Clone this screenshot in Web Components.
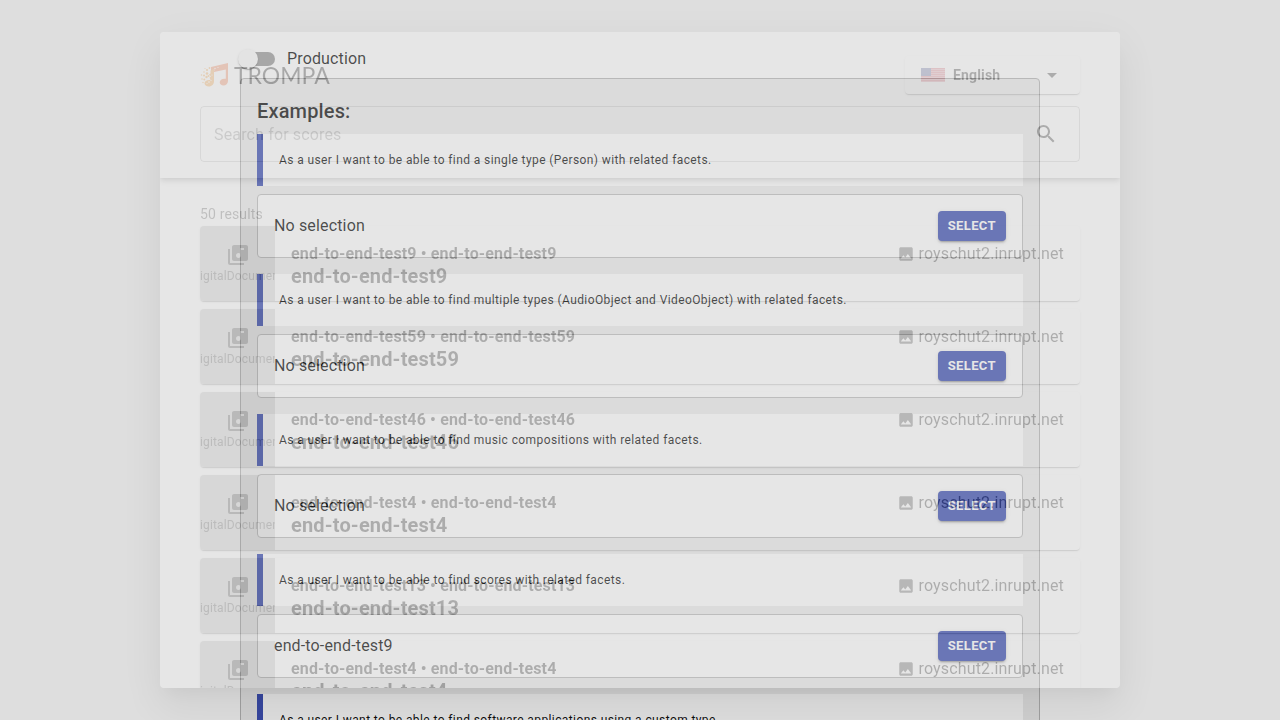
<!DOCTYPE html>
<html lang="en">
<head>
<meta charset="utf-8">
<meta name="viewport" content="width=device-width, initial-scale=1">
<title>Trompa multi modal component</title>
<style>
  html, body { height: 100%; }
  body {
    margin: 0;
    overflow: hidden;
    background: #fff;
    color: rgba(0, 0, 0, .87);
    font-family: Roboto, "Liberation Sans", sans-serif;
    letter-spacing: .00938em;
    --primary: #3f51b5;
    --fade: .26;
  }
</style>
</head>
<body>
<example-page>
  <toggle-switch label="Production"></toggle-switch>
  <example-panel heading="Examples:">
    <use-case value="No selection">As a user I want to be able to find a single type (Person) with related facets.</use-case>
    <use-case value="No selection">As a user I want to be able to find multiple types (AudioObject and VideoObject) with related facets.</use-case>
    <use-case value="No selection">As a user I want to be able to find music compositions with related facets.</use-case>
    <use-case value="end-to-end-test9">As a user I want to be able to find scores with related facets.</use-case>
    <use-case value="No selection">As a user I want to be able to find software applications using a custom type.</use-case>
  </example-panel>
</example-page>
<modal-dialog>
  <trompa-logo slot="brand"></trompa-logo>
  <language-select slot="tools"></language-select>
  <search-field slot="search" placeholder="Search for scores"></search-field>
  <result-list count="50 results">
    <result-card name="end-to-end-test9"></result-card>
    <result-card name="end-to-end-test59"></result-card>
    <result-card name="end-to-end-test46"></result-card>
    <result-card name="end-to-end-test4"></result-card>
    <result-card name="end-to-end-test13"></result-card>
    <result-card name="end-to-end-test4"></result-card>
  </result-list>
</modal-dialog>

<script>
const define = (name, render) => customElements.define(name, class extends HTMLElement {
  constructor() {
    super();
    this.attachShadow({ mode: 'open' });
  }
  connectedCallback() {
    this.shadowRoot.innerHTML = '<style>*{box-sizing:border-box}</style>' + render(this);
  }
});

define('example-page', () => `
  <style>
    :host { display: block; max-width: 800px; margin: 0 auto; padding: 40px 0; color: rgba(0,0,0,.94); }
  </style>
  <slot></slot>`);

define('toggle-switch', el => `
  <style>
    :host { display: block; height: 38px; }
    label { display: inline-flex; align-items: center; height: 38px; gap: 12px; font-size: 16px; line-height: 24px; cursor: pointer; }
    input { appearance: none; position: relative; display: flex; align-items: center; width: 36px; height: 20px; margin: 0 0 0 -1px; }
    input::before { content: ""; width: 34px; height: 14px; margin-left: 2px; border-radius: 7px; background: #000; opacity: .38; }
    input::after {
      content: ""; position: absolute; left: -1px; top: 0; width: 20px; height: 20px; border-radius: 50%; background: #fafafa;
      box-shadow: 0 2px 1px -1px rgba(0,0,0,.2), 0 1px 1px rgba(0,0,0,.14), 0 1px 3px rgba(0,0,0,.12);
    }
    input:checked::before { background: var(--primary); opacity: .5; }
    input:checked::after { left: 19px; background: var(--primary); }
  </style>
  <label><input type="checkbox" role="switch">${el.getAttribute('label')}</label>`);

define('example-panel', el => `
  <style>
    :host { display: block; padding: 16px; border: 1px solid #b8b8b8; border-radius: 4px; background: #eee; }
    h2 { margin: 0 0 7px; font-size: 20px; font-weight: 500; line-height: 32px; letter-spacing: .0075em; }
    .cases { display: grid; gap: 16px; }
  </style>
  <h2>${el.getAttribute('heading')}</h2>
  <div class="cases"><slot></slot></div>`);

define('use-case', el => `
  <style>
    :host { display: grid; gap: 8px; }
    blockquote {
      margin: 0; padding: 16px; border-left: 6px solid var(--primary); background: #fff;
      font-size: 12px; line-height: 20px; letter-spacing: .03333em;
    }
    .selection {
      display: flex; align-items: center; justify-content: space-between; gap: 16px;
      padding: 16px; border: 1px solid #c0c0c0; border-radius: 4px; background: #fff;
      font-size: 16px; line-height: 24px;
    }
    button {
      padding: 4px 10px; border: 0; border-radius: 4px; background: var(--primary); color: #fff; cursor: pointer;
      font: 700 13px/22px Roboto, sans-serif; letter-spacing: .02857em; text-transform: uppercase;
      box-shadow: 0 3px 1px -2px rgba(0,0,0,.2), 0 2px 2px rgba(0,0,0,.14), 0 1px 5px rgba(0,0,0,.12);
    }
  </style>
  <blockquote><slot></slot></blockquote>
  <div class="selection"><span>${el.getAttribute('value')}</span><button type="button">Select</button></div>`);

define('modal-dialog', () => `
  <style>
    :host { position: fixed; inset: 0; display: flex; justify-content: center; padding: 32px; box-sizing: border-box; }
    .backdrop { position: absolute; inset: 0; background: rgba(0,0,0,.5); opacity: var(--fade); }
    .paper {
      position: relative; flex: 1; max-width: 960px; display: flex; flex-direction: column; overflow: hidden;
      border-radius: 4px; background: #fff; opacity: var(--fade);
      box-shadow: 0 11px 15px -7px rgba(0,0,0,.2), 0 24px 38px 3px rgba(0,0,0,.14), 0 9px 46px 8px rgba(0,0,0,.12);
    }
    header {
      flex: none; display: grid; gap: 12px; padding: 24px 40px 16px; background: #fff; z-index: 1;
      box-shadow: 0 2px 4px -1px rgba(0,0,0,.2), 0 4px 5px rgba(0,0,0,.14), 0 1px 10px rgba(0,0,0,.12);
    }
    .bar { display: flex; align-items: center; justify-content: space-between; }
    main { flex: 1; min-height: 0; overflow: hidden; padding: 24px 40px; }
  </style>
  <div class="backdrop"></div>
  <div class="paper" role="dialog" aria-modal="true" aria-label="Search for scores">
    <header>
      <div class="bar"><slot name="brand"></slot><slot name="tools"></slot></div>
      <slot name="search"></slot>
    </header>
    <main><slot></slot></main>
  </div>`);

define('trompa-logo', () => `
  <style>
    :host { display: flex; align-items: center; gap: 6px; color: #111; font: 400 23px/24px Lato, sans-serif; letter-spacing: normal; }
    svg { display: block; }
  </style>
  <svg width="28" height="24" viewBox="0 0 28 24" aria-hidden="true">
    <path fill="#f47c4c" d="M11 4 28 0v18c0 2.500-2 4.500-4.500 4.500-2.200 0-3.800-1.300-3.800-3.200 0-2.500 2.800-4.200 6.100-3.500V6.500L14 9v4l-3-1z"/>
    <g fill="#fff"><circle cx="15" cy="5.500" r=".7"/><circle cx="18" cy="4.500" r=".6"/><circle cx="14" cy="7" r=".6"/></g>
    <g fill="#f5a244">
      <path d="M10.500 7.500 14 6v12c0 3.200-2 5.500-5.200 5.500-2.500 0-4.300-1.300-4.300-3.200 0-2.400 2.600-3.800 6-3.300l-1-2.400 1.500-1.200-2-2 1.500-1z"/>
      <circle cx="7" cy="7" r="1.100"/><circle cx="9.500" cy="5" r=".9"/><circle cx="4" cy="9" r=".8"/><circle cx="7" cy="10.500" r="1.300"/>
      <circle cx="1.500" cy="12" r=".8"/><circle cx="4" cy="12.500" r="1"/><circle cx="6.500" cy="14" r="1.200"/><circle cx="2" cy="16" r=".8"/>
      <circle cx="4.300" cy="16.500" r="1"/><circle cx="3" cy="19.500" r=".7"/><circle cx="5" cy="5.500" r=".6"/><circle cx="8.500" cy="13" r="1"/>
    </g>
    <g fill="#fff"><circle cx="9" cy="19" r=".8"/><circle cx="7" cy="20.500" r=".5"/><circle cx="11" cy="17.500" r=".6"/><circle cx="12" cy="12" r=".6"/></g>
  </svg>
  <span>TROMPA</span>`);

define('language-select', () => {
  let stripes = '';
  for (let i = 0; i < 7; i++) stripes += `<path fill="#dc7480" d="M0 ${i * 2}h24v1H0z"/>`;
  let stars = '';
  for (let y = 1; y < 7; y += 2) for (let x = 1; x < 10; x += 2) stars += `<circle cx="${x}" cy="${y}" r=".35"/>`;
  return `
  <style>
    :host { display: grid; align-items: center; width: 175px; height: 38px; border-radius: 4px; background: #fff;
      box-shadow: 0 2px 1px -1px rgba(0,0,0,.2), 0 1px 1px rgba(0,0,0,.14), 0 1px 3px rgba(0,0,0,.12); }
    :host > * { grid-area: 1 / 1; }
    svg { pointer-events: none; grid-area: 1 / 1; }
    .flag { margin-left: 16px; }
    .arrow { justify-self: end; margin-right: 16px; fill: rgba(0,0,0,.87); }
    select { grid-area: 1 / 1; appearance: none; width: 100%; height: 38px; margin: 0; padding: 0 48px; border: 0; background: none;
      color: rgba(0,0,0,.87); font: 700 14px/24px Roboto, sans-serif; letter-spacing: .01071em; }
  </style>
  <select aria-label="Language"><option>English</option><option>Nederlands</option></select>
  <svg class="flag" width="24" height="14" viewBox="0 0 24 14" aria-hidden="true">
    <path fill="#e8a4ac" d="M0 0h24v14H0z"/>${stripes}<path fill="#6068a0" d="M0 0h10v8H0z"/><g fill="#b8bcd8">${stars}</g>
  </svg>
  <svg class="arrow" width="24" height="24" viewBox="0 0 24 24" aria-hidden="true"><path d="M7 10l5 5 5-5z"/></svg>`;
});

define('search-field', el => `
  <style>
    :host { display: flex; align-items: center; height: 56px; padding-right: 9px; border: 1px solid rgba(0,0,0,.23); border-radius: 4px; box-sizing: border-box; }
    input { flex: 1; min-width: 0; height: 100%; padding: 0 13px; border: 0; outline: 0; background: none; color: inherit; font: 16px/24px Roboto, sans-serif; letter-spacing: .00938em; }
    input::placeholder { color: rgba(0,0,0,.42); opacity: 1; }
    button { display: flex; padding: 12px; border: 0; background: none; cursor: pointer; }
    svg { fill: rgba(0,0,0,.87); }
  </style>
  <input type="text" aria-label="${el.getAttribute('placeholder')}" placeholder="${el.getAttribute('placeholder')}">
  <button type="button" aria-label="Search"><svg width="24" height="24" viewBox="0 0 24 24" aria-hidden="true"><path d="M15.500 14h-.79l-.28-.27C15.410 12.590 16 11.110 16 9.500 16 5.910 13.090 3 9.500 3S3 5.910 3 9.500 5.910 16 9.500 16c1.610 0 3.090-.59 4.230-1.570l.27.28v.79l5 4.990L20.490 19l-4.990-5zm-6 0C7.010 14 5 11.990 5 9.500S7.010 5 9.500 5 14 7.010 14 9.500 11.990 14 9.500 14z"/></svg></button>`);

define('result-list', el => `
  <style>
    :host { display: block; }
    p { margin: 0; font-size: 14px; line-height: 24px; color: rgba(0,0,0,.6); }
    .items { display: grid; gap: 8px; }
  </style>
  <p>${el.getAttribute('count')}</p>
  <div class="items"><slot></slot></div>`);

define('result-card', el => {
  const name = el.getAttribute('name');
  return `
  <style>
    :host { display: flex; height: 75px; overflow: hidden; border-radius: 4px; background: #fff;
      box-shadow: 0 2px 1px -1px rgba(0,0,0,.2), 0 1px 1px rgba(0,0,0,.14), 0 1px 3px rgba(0,0,0,.12); }
    .kind { flex: none; width: 75px; display: flex; flex-direction: column; align-items: center; justify-content: center;
      overflow: hidden; background: #c4c4c4; color: #5c5c5c; font-size: 12px; line-height: 18px; }
    .kind svg { flex: none; fill: #545454; }
    .body { flex: 1; min-width: 0; padding: 16px; }
    .row { display: flex; justify-content: space-between; font-size: 16px; line-height: 24px; }
    strong { font-weight: 700; }
    .source { display: flex; align-items: center; gap: 3px; }
    .source svg { fill: rgba(0,0,0,.7); }
    h3 { margin: 0; font-size: 20px; font-weight: 700; line-height: 20px; letter-spacing: .0075em; }
  </style>
  <div class="kind">
    <svg width="24" height="24" viewBox="0 0 24 24" aria-hidden="true"><path d="M20 2H8c-1.100 0-2 .9-2 2v12c0 1.100.9 2 2 2h12c1.100 0 2-.9 2-2V4c0-1.100-.9-2-2-2zm-2 5h-3v5.500c0 1.380-1.120 2.500-2.500 2.500S10 13.880 10 12.500s1.120-2.500 2.500-2.500c.57 0 1.080.19 1.500.51V5h4v2zM4 6H2v14c0 1.100.9 2 2 2h14v-2H4V6z"/></svg>
    <span>DigitalDocument</span>
  </div>
  <div class="body">
    <div class="row">
      <strong>${name} • ${name}</strong>
      <span class="source"><svg width="18" height="18" viewBox="0 0 24 24" aria-hidden="true"><path d="M21 19V5c0-1.100-.9-2-2-2H5c-1.100 0-2 .9-2 2v14c0 1.100.9 2 2 2h14c1.100 0 2-.9 2-2zM8.500 13.500l2.500 3.010L14.500 12l4.500 6H5l3.500-4.500z"/></svg>royschut2.inrupt.net</span>
    </div>
    <h3>${name}</h3>
  </div>`;
});
</script>
</body>
</html>
